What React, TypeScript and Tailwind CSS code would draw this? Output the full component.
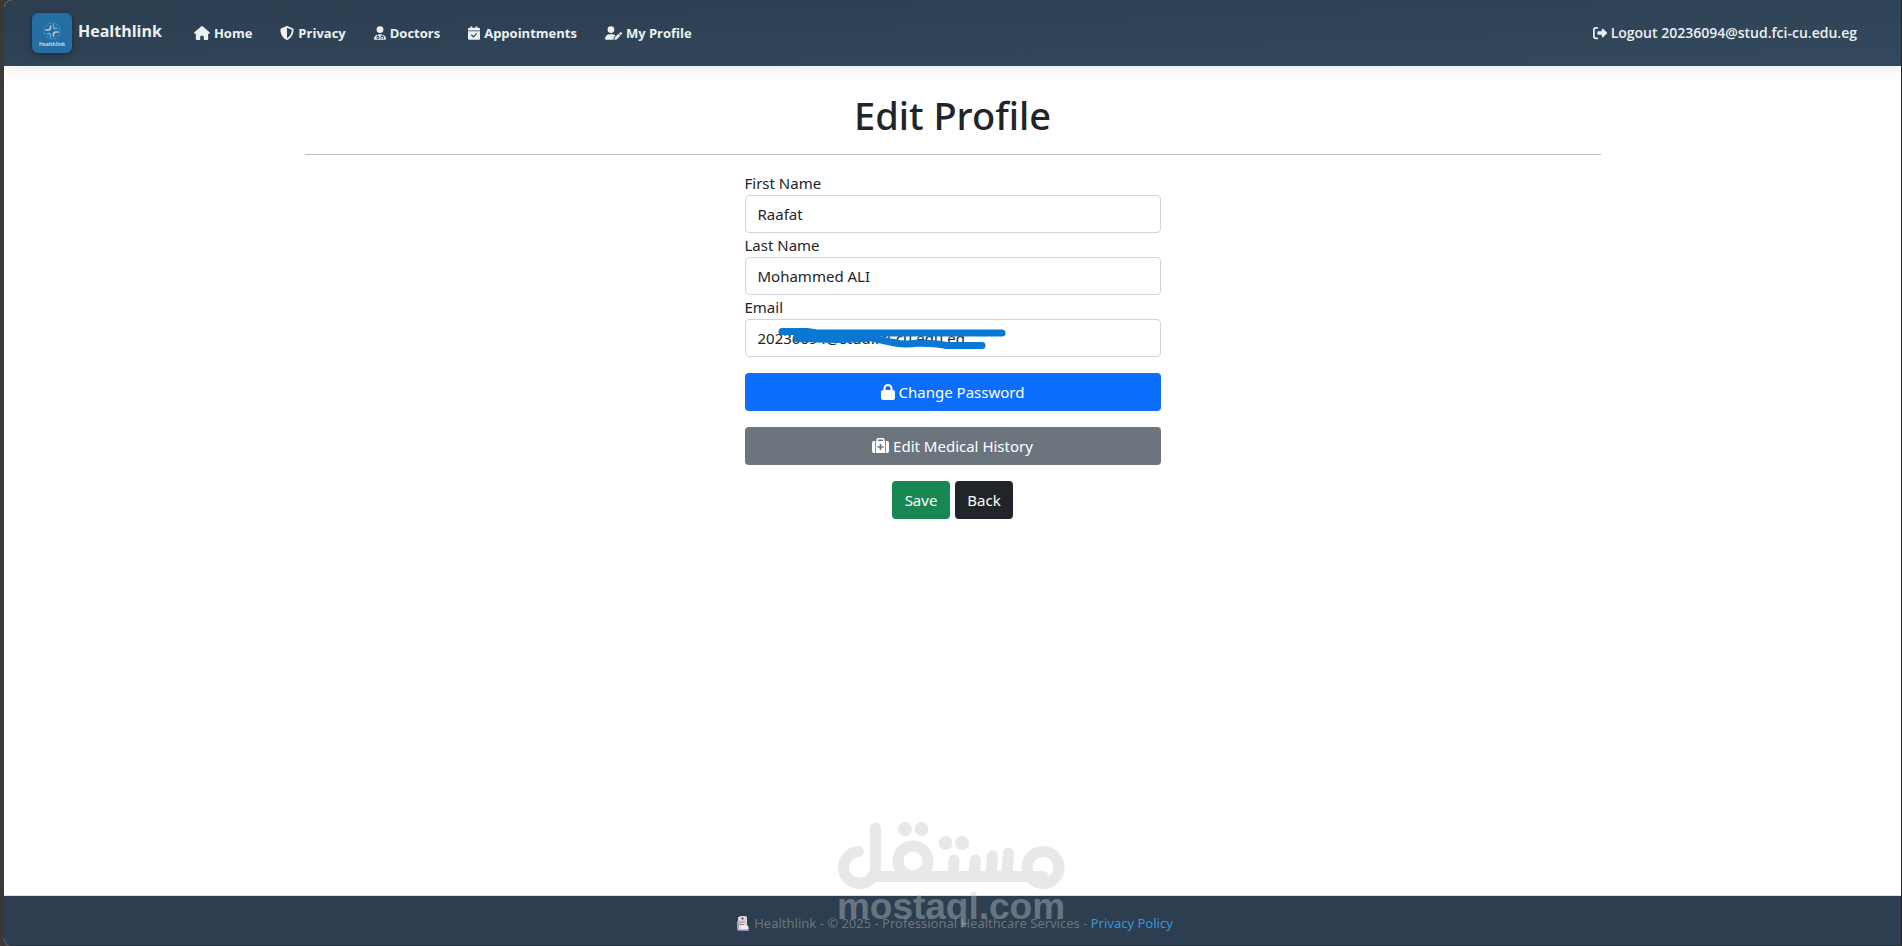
import React from "react";
import {
  FaHouse,
  FaShieldHalved,
  FaUserDoctor,
  FaCalendarCheck,
  FaUserPen,
  FaRightFromBracket,
  FaLock,
} from "react-icons/fa6";

const links = [
  { label: "Home", Icon: FaHouse, size: "h-3.5 w-4" },
  { label: "Privacy", Icon: FaShieldHalved, size: "h-3.5 w-3.5" },
  { label: "Doctors", Icon: FaUserDoctor, size: "h-3.5 w-3" },
  { label: "Appointments", Icon: FaCalendarCheck, size: "h-3.5 w-3" },
  { label: "My Profile", Icon: FaUserPen, size: "h-3.5 w-[17px]" },
];

function Logo() {
  return (
    <span className="flex h-10 w-10 flex-col items-center justify-center rounded-md bg-[#246ea2] pt-1 shadow-[0_2px_6px_rgba(0,0,0,0.35)]">
      <svg viewBox="0 0 18 18" className="h-[18px] w-[18px]" fill="none" aria-hidden="true">
        <circle cx="9" cy="9" r="8" stroke="#4f97c8" strokeWidth="1" strokeDasharray="3 1.2" />
        <path d="M7.500 3.500v2Q7.500 8 5 8H2.500" stroke="#c0c6cc" strokeWidth="1.600" />
        <path d="M10.500 14.500v-2Q10.500 10 13 10h2.500" stroke="#c0c6cc" strokeWidth="1.600" />
        <path d="M10.500 2.500v3Q11 7.500 14 6" stroke="#5fb0e4" strokeWidth="1.400" />
        <path d="M7.500 15.500v-3Q7 10.500 4 12" stroke="#5fb0e4" strokeWidth="1.400" />
      </svg>
      <span className="text-[5px] leading-[8px] font-bold text-[#c3d9e8]">Healthlink</span>
    </span>
  );
}

function Hospital() {
  return (
    <svg viewBox="0 0 14 15" className="h-[15px] w-[14px]" aria-hidden="true">
      <path d="M3 1 4.500 0h5L11 1v13H2V1z" fill="#d5d8dd" />
      <path d="M1 5h2v9H1z" fill="#a9a3ae" />
      <path d="M6 1h1v1h1v1H7v1H6V3H5V2h1z" fill="#d9434f" />
      <path d="M3 5.500h6v1H3zM3 8h5v1H3z" fill="#b4788f" />
      <path d="M5 9.500h7l1 4H4z" fill="#eceef1" />
      <path d="M2 13.500h11V15H2z" fill="#9a86c5" />
    </svg>
  );
}

function MedicalCase() {
  return (
    <svg viewBox="0 0 17 16" className="h-4 w-[17px]" aria-hidden="true">
      <path d="M3 3v12H2Q0 15 0 13V5Q0 3 2 3zM14 3v12h1q2 0 2-2V5q0-2-2-2z" fill="currentColor" />
      <path
        fillRule="evenodd"
        d="M4.500 3V1.500Q4.500 0 6 0h5q1.500 0 1.500 1.500V3h.7v12H3.800V3zM6 3h5V1.500H6zM7.700 6v2.200H5.500v1.600h2.200V12h1.600V9.800h2.200V8.200H9.300V6z"
        fill="currentColor"
      />
    </svg>
  );
}

function Field({ id, label, value, type = "text", children }: { id: string; label: string; value: string; type?: string; children?: React.ReactNode }) {
  return (
    <div>
      <label htmlFor={id} className="block leading-6">{label}</label>
      <div className="relative">
        <input
          id={id}
          type={type}
          defaultValue={value}
          className="block h-[38px] w-full rounded border border-[#ced4da] bg-white px-3 text-[#212529] outline-none focus:border-[#86b7fe]"
        />
        {children}
      </div>
    </div>
  );
}

function Watermark() {
  return (
    <svg
      viewBox="0 0 228 106"
      className="pointer-events-none absolute bottom-[18px] left-1/2 -ml-[116px] h-[106px] w-[228px] overflow-visible opacity-40"
      aria-hidden="true"
    >
      <g fill="none" stroke="#c4c6ca" strokeWidth="11" strokeLinecap="round">
        <path d="M21.500 29.500A16 16 0 1 0 38.500 45V6M38 54.500H206" />
        <circle cx="76" cy="39" r="15" />
        <circle cx="206" cy="45.500" r="16" />
        <path d="M116 52 117 38M137 52 138.500 38M154 52 155.500 34M170 52 171.500 31" />
      </g>
      <g fill="#c4c6ca">
        <circle cx="68" cy="7" r="7" />
        <circle cx="84.500" cy="7" r="7" />
        <circle cx="108.500" cy="21" r="7" />
        <circle cx="125" cy="21" r="7" />
      </g>
      <text x="114" y="97" textAnchor="middle" fontFamily="Liberation Sans, Arial, sans-serif" fontWeight="700" fontSize="37" fill="#c4c6ca">
        mostaql.com
      </text>
    </svg>
  );
}

export default function App() {
  return (
    <div className="min-h-screen border-r border-l-4 border-r-[#222629] border-l-[#3b3938] bg-[#3b3938] font-['Noto_Sans','Open_Sans',sans-serif] text-[15px] text-[#212529]">
      <div className="relative flex min-h-screen flex-col overflow-hidden rounded-l-lg bg-white">
        <header className="flex h-[66px] items-center bg-linear-to-br from-[#2c3e50] to-[#34495e] pr-11 pl-7 font-['Open_Sans',sans-serif] shadow-[0_2px_15px_rgba(0,0,0,0.1)]">
          <a href="#home" className="flex items-center gap-1.5">
            <Logo />
            <span className="pb-1 text-[16px] leading-6 font-bold text-[#ecf0f1]">Healthlink</span>
          </a>
          <nav className="ml-8 flex items-center gap-7">
            {links.map(({ label, Icon, size }) => (
              <a key={label} href="#" className="flex items-center gap-1 text-[13px] leading-5 font-bold text-[#ecf0f1]">
                <Icon className={size} />
                {label}
              </a>
            ))}
          </nav>
          <a href="#logout" className="ml-auto flex items-center gap-1 text-[14px] leading-5 font-semibold text-[#ecf0f1]">
            <FaRightFromBracket className="h-3.5 w-3.5" />
            Logout 20236094@stud.fci-cu.edu.eg
          </a>
        </header>

        <main className="mx-auto w-full max-w-[1320px] flex-1 px-3 pt-[25px]">
          <h1 className="text-center text-[38px] leading-[48px] font-medium">Edit Profile</h1>
          <hr className="mt-[15px] mb-4 border-0 border-t border-[#bcbec0]" />
          <form className="mx-auto w-full max-w-[416px]" onSubmit={(e) => e.preventDefault()}>
            <Field id="first" label="First Name" value="Raafat" />
            <Field id="last" label="Last Name" value="Mohammed ALI" />
            <Field id="email" label="Email" value="20236094@stud.fci-cu.edu.eg" type="email">
              <svg viewBox="0 0 230 24" className="pointer-events-none absolute top-[7px] left-8 h-6 w-[230px]" aria-hidden="true">
                <g fill="none" stroke="#0878d4" strokeWidth="7" strokeLinecap="round" strokeLinejoin="round">
                  <path d="M5 5.500H30L40 7H225" />
                  <path d="M20 12 30 9 90 11 118 17Q128 19 142 17L160 18 170 19.500H205" />
                  <path d="M20 12 60 13 90 12" strokeWidth="8" />
                </g>
              </svg>
            </Field>
            <div className="mt-4 flex flex-col gap-4">
              <button type="button" className="flex h-[38px] items-center justify-center gap-1 rounded bg-[#0d6efd] text-white">
                <FaLock className="h-4 w-3.5" />
                Change Password
              </button>
              <button type="button" className="flex h-[38px] items-center justify-center gap-1 rounded bg-[#6c757d] text-white">
                <MedicalCase />
                Edit Medical History
              </button>
              <div className="flex justify-center gap-[5px]">
                <button type="submit" className="h-[38px] w-[58px] rounded bg-[#198754] text-white">Save</button>
                <button type="button" className="h-[38px] w-[58px] rounded bg-[#212529] text-white">Back</button>
              </div>
            </div>
          </form>
        </main>

        <footer className="flex h-[51px] items-center justify-center border-t border-b border-t-[#dee2e6] border-b-[#253444] bg-[#2c3e50] pt-1.5 pl-1 text-[13px] text-[#6c757d]">
          <Hospital />
          <p className="ml-1">
            Healthlink - © 2025 - Professional Healthcare Services -{" "}
            <a href="#privacy" className="text-[#3498db]">Privacy Policy</a>
          </p>
        </footer>
        <Watermark />
      </div>
    </div>
  );
}
